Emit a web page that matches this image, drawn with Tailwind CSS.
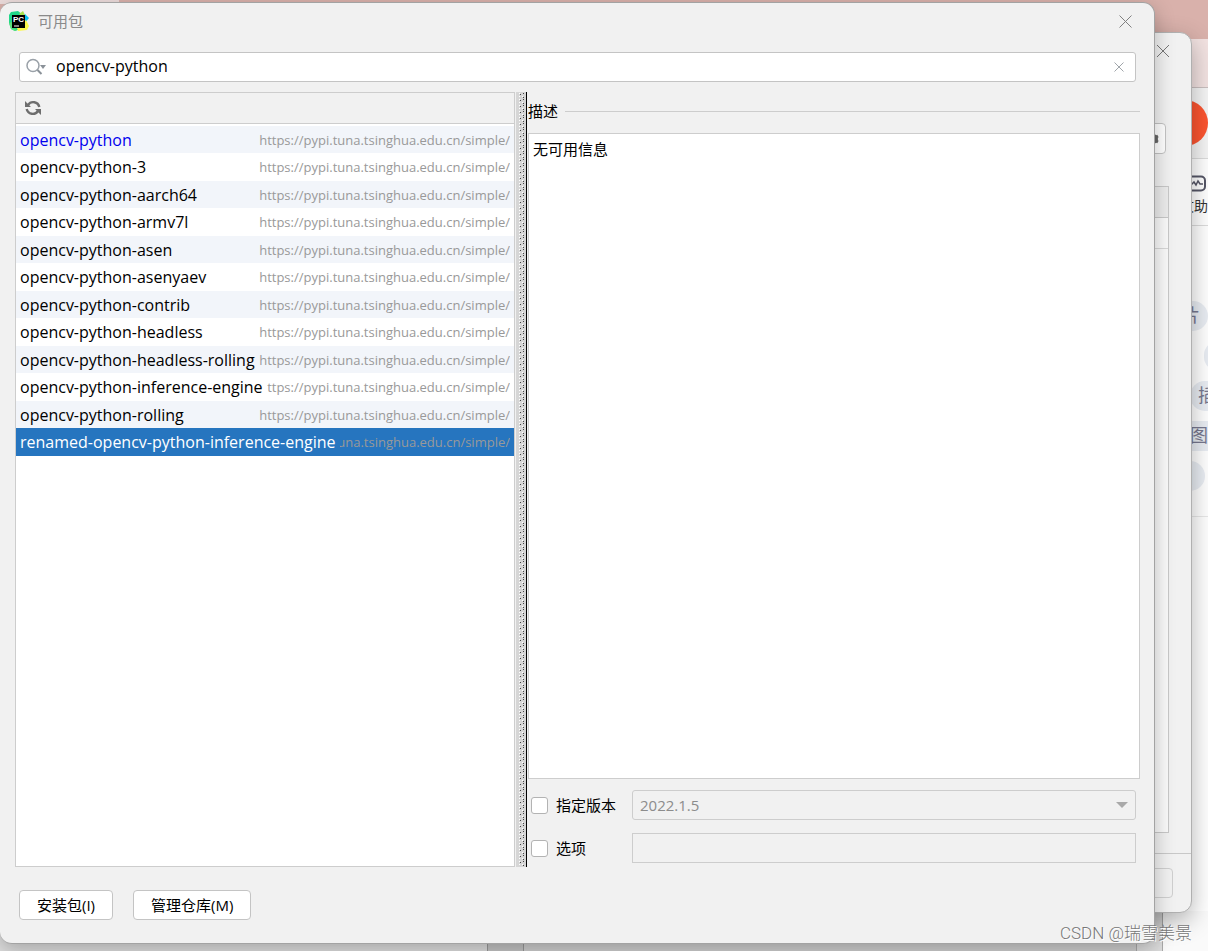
<!DOCTYPE html>
<html lang="zh-CN">
<head>
<meta charset="utf-8">
<title>可用包</title>
<script src="https://cdn.jsdelivr.net/npm/@tailwindcss/browser@4"></script>
</head>
<body class="relative h-screen overflow-hidden bg-[#f4f4f4] font-['Open_Sans','Noto_Sans_CJK_SC',sans-serif] text-[15px] text-black">

<!-- Browser page behind the windows -->
<div class="flex h-full flex-col text-[#333]">
  <div class="flex h-[39px] shrink-0 bg-[#d9b1ab]"><div class="h-1 w-[119px] bg-[#ecdcdb]"></div></div>
  <div class="h-[49px] shrink-0 border-b border-[#c9bfbf] bg-[#f2e2e1]"></div>
  <div class="flex h-[71px] shrink-0 justify-end overflow-hidden border-b border-[#dcdcdc] bg-[#f5f5f5] pt-3"><div class="size-[46px] rounded-full bg-[#fc5531]"></div></div>
  <div class="flex h-[67px] shrink-0 flex-col items-end border-b border-[#dcdcdc] bg-white pt-4">
    <svg class="mr-[2px] h-[17px] w-[22px]" viewBox="0 0 22 17" fill="none" stroke="#555666"><rect x="1" y="1.500" width="20" height="14" rx="4" stroke-width="2"/><path d="M4 9h4l2-2 2 3 2-4 2 3h3" stroke-width="1.500"/></svg>
    <span class="mt-[2px] text-sm leading-6">文助</span>
  </div>
  <div class="flex h-[291px] shrink-0 flex-col items-end overflow-hidden border-b border-[#e8e8e8] bg-white pt-[75px] text-lg leading-[28px] text-[#77788f]">
    <div class="h-[30px] w-16 rounded-full bg-[#e9edf3] pr-2 text-right">片</div>
    <div class="mt-[10px] -mr-6 h-[30px] w-7 rounded-full bg-[#e9edf3]"></div>
    <div class="mt-[10px] -mr-3 h-[30px] w-[30px] rounded-l-full bg-[#e9edf3] pl-[8px]">插</div>
    <div class="mt-[10px] h-[30px] w-14 bg-[#e9edf3] text-right">图</div>
    <div class="mt-[10px] mr-[3px] h-[30px] w-14 rounded-full bg-[#e9edf3] pr-3 text-right">]</div>
  </div>
  <div class="flex grow items-end bg-white">
    <div class="flex h-10 w-full bg-[#cfcfcf]">
      <div class="w-[488px] border-r border-[#999] bg-[#dedede]"></div>
      <div class="w-9 border-r border-[#999] bg-[#c4c4c4]"></div>
      <div class="grow"></div>
      <div class="w-[27px] border-x border-[#aaa] bg-[#dcdcdc]"></div>
      <div class="w-[45px] bg-[#fafafa]"></div>
    </div>
  </div>
</div>

<!-- Interpreter settings window, mostly covered -->
<section aria-label="设置" class="absolute top-[32px] right-[16px] bottom-[38px] left-10 flex flex-col rounded-xl border border-[#b0b0b0] bg-[#f1f1f1] shadow-[0_8px_24px_rgba(0,0,0,0.3)]">
  <div class="flex h-9 shrink-0 items-center justify-end pr-[22px]">
    <button aria-label="关闭设置"><svg class="size-3" viewBox="0 0 12 12" stroke="#777" stroke-width="1"><path d="M0 0L12 12M12 0L0 12"/></svg></button>
  </div>
  <div class="mt-[54px] flex justify-end pr-[25px]">
    <button aria-label="解释器选项" class="flex h-[31px] w-9 items-center justify-end rounded border border-[#c3c3c3] bg-white pr-[6px]">
      <svg class="size-3" viewBox="0 0 12 12" fill="none" stroke="#666" stroke-width="3"><circle cx="6" cy="6" r="3.500"/><path d="M6 0v2M6 10v2M1 3l2 1M11 3l-2 1M1 9l2-1M11 9l-2-1"/></svg>
    </button>
  </div>
  <div class="mt-[32px] mr-[22px] mb-[20px] flex grow flex-col border border-[#c8c8c8] bg-[#fafafa]">
    <div class="h-[31px] border-b border-[#c8c8c8] bg-[#ececec]"></div>
    <div class="h-[31px] border-b border-[#d8d8d8]"></div>
  </div>
  <div class="flex h-[59px] shrink-0 justify-end border-t border-[#c8c8c8] pt-[14px] pr-[18px]">
    <button aria-label="应用" disabled class="h-[30px] w-24 rounded border border-[#cfcfcf]"></button>
  </div>
</section>

<!-- Available packages dialog -->
<main class="absolute top-[2px] right-[53px] bottom-[7px] left-0 flex flex-col rounded-xl border-t border-r border-b border-[#a3a3a3] bg-[#f1f1f1] shadow-[0_6px_20px_rgba(0,0,0,0.25)]">
  <header class="flex h-9 shrink-0 items-center pr-[22px] pl-[9px]">
    <svg class="size-5" viewBox="0 0 20 20">
      <path d="M0 4L2 1l7-1 5 4v13l-8 3-4-2-2-6z" fill="#21d789"/>
      <path d="M10 3l4-3 2 4-2 3z" fill="#a8e04c"/>
      <path d="M14 7l2-4 4 4-4 5z" fill="#07c3f2"/>
      <path d="M8 17l9-8 3 6-2 4-9 1z" fill="#fcf84a"/>
      <path d="M0 12l3-1v6l5 2-2 1-4-2z" fill="#5be07b"/>
      <rect x="3" y="4" width="13" height="13" fill="#000"/>
      <path d="M5 15h5" stroke="#fff" stroke-width="1"/>
      <text x="4" y="11" font-family="Liberation Sans" font-weight="700" font-size="8" fill="#fff">PC</text>
    </svg>
    <h1 class="ml-[9px] grow text-[15px] leading-5 text-[#8a8a8a]">可用包</h1>
    <button aria-label="关闭"><svg class="size-[13px]" viewBox="0 0 13 13" stroke="#808080" stroke-width="1"><path d="M.5 .5L12.500 12.500M12.500 .5L.5 12.500"/></svg></button>
  </header>

  <div class="mt-[13px] mr-[18px] ml-[19px] flex h-[30px] shrink-0 items-center rounded-[3px] border border-[#c4c4c4] bg-white pr-[11px] pl-[6px]">
    <svg class="h-[18px] w-[22px] shrink-0" viewBox="0 0 22 18" fill="none"><circle cx="7" cy="7.500" r="6" stroke="#9aa1a8" stroke-width="1.500"/><path d="M11.500 12l4 4" stroke="#8a9198" stroke-width="2"/><path d="M14 7h6l-3 4z" fill="#8a9198"/></svg>
    <input id="query" aria-label="搜索包" value="opencv-python" class="ml-2 h-[26px] min-w-0 grow pb-[2px] text-[16px] outline-none">
    <button aria-label="清除"><svg class="size-[10px]" viewBox="0 0 10 10" stroke="#a0a5aa" stroke-width="1"><path d="M.5 .5l9 9M9.500 .5l-9 9"/></svg></button>
  </div>

  <div class="mt-[10px] mr-[14px] ml-[15px] flex min-h-0 grow">
    <div class="flex w-[500px] shrink-0 flex-col border border-[#cdcdcd] bg-white">
      <div class="flex h-[31px] shrink-0 items-center border-b border-[#cdcdcd] bg-[#f1f1f1] pl-[9px]">
        <button aria-label="刷新"><svg class="size-4" viewBox="0 0 16 16" fill="none" stroke="#6e6e6e" stroke-width="2.400"><path d="M3 5A6.200 6.200 0 0 1 14.300 7M13 11A6.200 6.200 0 0 1 1.700 9"/><path d="M0 1v6h6zM16 15V9h-6z" fill="#6e6e6e" stroke="none"/></svg></button>
      </div>
      <ul id="packages" class="pt-[2px] text-[16px] leading-7"></ul>
    </div>
    <div class="ml-px w-[11px] shrink-0 border-r border-black bg-[#d6d6d6]">
      <svg class="h-full w-[10px]" aria-hidden="true" shape-rendering="crispEdges"><defs><pattern id="grip" width="10" height="6" patternUnits="userSpaceOnUse"><path d="M3 1h1v1h-1zM6 4h1v1h-1z" fill="#fff"/><path d="M4 2h1v1h-1zM7 5h1v1h-1z" fill="#444"/><path d="M7 1h1v1h-1z" fill="#444"/><path d="M3 4h1v1h-1z" fill="#fff"/></pattern></defs><rect width="10" height="100%" fill="url(#grip)"/></svg>
    </div>
    <div class="flex min-w-0 grow flex-col">
      <div class="flex h-[38px] shrink-0 items-center pl-px"><h2 class="mr-[7px] leading-5">描述</h2><hr class="grow border-[#cdcdcd]"></div>
      <div class="mt-[3px] ml-px grow border border-[#cdcdcd] bg-white px-1 py-[5px] leading-5">无可用信息</div>
      <div class="mt-[11px] mr-1 flex h-[30px] shrink-0 items-center pl-1">
        <label class="flex w-[101px] shrink-0 items-center gap-2 leading-5"><input type="checkbox" class="size-[17px] appearance-none rounded-[3px] border border-[#b3b3b3] bg-white">指定版本</label>
        <div class="relative h-[30px] grow">
          <select aria-label="版本" disabled class="h-full w-full appearance-none rounded-[3px] border border-[#cdcdcd] bg-[#f1f1f1] pl-[7px] text-[15px] text-[#8c8c8c] opacity-100"><option>2022.1.5</option></select>
          <svg class="pointer-events-none absolute top-3 right-2 h-[6px] w-3" viewBox="0 0 12 6"><path d="M0 0h12L6 6z" fill="#a9a9a9"/></svg>
        </div>
      </div>
      <div class="mt-[13px] mr-1 mb-[4px] flex h-[30px] shrink-0 items-center pl-1">
        <label for="opt" class="flex w-[101px] shrink-0 items-center gap-2 leading-5"><input id="opt" type="checkbox" class="size-[17px] appearance-none rounded-[3px] border border-[#b3b3b3] bg-white">选项</label>
        <input aria-label="选项值" disabled class="h-[30px] min-w-0 grow border border-[#cdcdcd] bg-[#f1f1f1]">
      </div>
    </div>
  </div>

  <footer class="flex shrink-0 gap-5 pt-[23px] pb-[23px] pl-[19px]">
    <button class="h-[30px] rounded-[4px] border border-[#c4c4c4] bg-white px-[17px] text-[15px] leading-5">安装包(I)</button>
    <button class="h-[30px] rounded-[4px] border border-[#c4c4c4] bg-white px-[17px] text-[15px] leading-5">管理仓库(M)</button>
  </footer>
</main>

<div class="pointer-events-none absolute right-4 bottom-1 font-['Roboto','Noto_Sans_CJK_SC',sans-serif] text-[17px] leading-7 font-light text-[#777] [text-shadow:1px_1px_0_#fff]">CSDN @瑞雪美景</div>

<template id="row">
  <li class="flex gap-1 overflow-hidden px-1 odd:h-[27px] odd:bg-[#f2f5fa] even:h-7 aria-selected:bg-[#2675bf] aria-selected:text-white">
    <span class="shrink-0 whitespace-nowrap"></span>
    <span class="flex min-w-0 grow justify-end overflow-hidden text-[13px] whitespace-nowrap text-[#999]"></span>
  </li>
</template>
<script>
const names = ["opencv-python","opencv-python-3","opencv-python-aarch64","opencv-python-armv7l","opencv-python-asen","opencv-python-asenyaev","opencv-python-contrib","opencv-python-headless","opencv-python-headless-rolling","opencv-python-inference-engine","opencv-python-rolling","renamed-opencv-python-inference-engine"];
const list = document.getElementById("packages");
names.forEach((name, i) => {
  const li = document.getElementById("row").content.cloneNode(true).firstElementChild;
  li.children[0].textContent = name;
  li.children[1].textContent = "https://pypi.tuna.tsinghua.edu.cn/simple/";
  if (i === 0) li.children[0].classList.add("text-[#0000ee]");
  if (i === names.length - 1) li.setAttribute("aria-selected", "true");
  list.append(li);
});
</script>
</body>
</html>
